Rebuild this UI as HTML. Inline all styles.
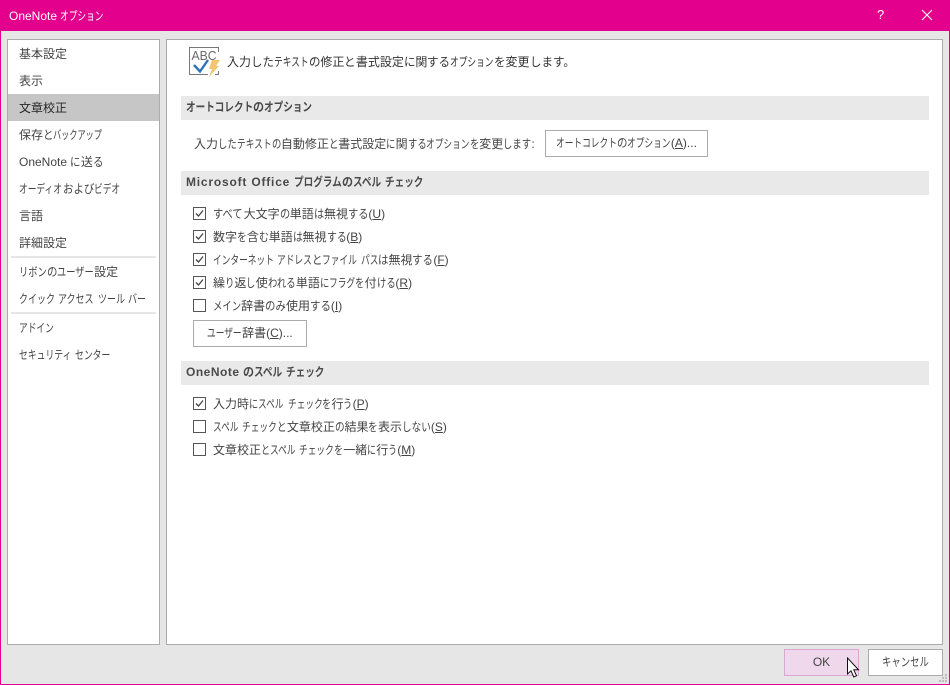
<!DOCTYPE html>
<html lang="ja"><head><meta charset="utf-8"><title>OneNote オプション</title>
<style>
html,body{margin:0;padding:0}
body{--ks:.725;--hs:.87;width:950px;height:685px;overflow:hidden;background:#e6e6e6;position:relative;font-family:"Liberation Sans","Noto Sans CJK JP",sans-serif;font-size:12px;color:#444}
.a{position:absolute;white-space:nowrap;line-height:16px}
.box{position:absolute;box-sizing:border-box;background:#fff;border:1px solid #ababab}
.sec{--ks:.8;--hs:.92;position:absolute;left:181px;width:748px;height:24px;background:#e9e9e9;font-weight:bold;line-height:23px;padding-left:5px;box-sizing:border-box;color:#4a4a4a;white-space:nowrap}
.cb{position:absolute;left:193px;width:13px;height:13px;box-sizing:border-box;border:1px solid #555;background:#fff}
.btn{position:absolute;box-sizing:border-box;background:#fff;border:1px solid #ababab;text-align:center;color:#444;white-space:nowrap}
.sep{position:absolute;left:11px;width:145px;height:2px;background:#e6e6e6}
u{text-decoration:underline}
i,em{font-style:normal;display:inline-block;white-space:nowrap;transform-origin:0 50%}
i{width:calc(var(--n)*12px*var(--ks));transform:scaleX(var(--ks))}
em{width:calc(var(--n)*12px*var(--hs));transform:scaleX(var(--hs))}
</style></head><body>
<div style="position:absolute;left:0;top:0;width:950px;height:31px;background:#e3008c"></div>
<div style="position:absolute;left:0;top:31px;width:1px;height:654px;background:#e3008c"></div>
<div style="position:absolute;right:0;top:31px;width:1px;height:654px;background:#e3008c"></div>
<div style="position:absolute;left:0;top:684px;width:950px;height:1px;background:#e3008c"></div>
<div class="a" style="left:9px;top:8px;color:#fff">OneNote <i style="--n:5">オプション</i></div>
<div class="a" style="left:877px;top:7px;color:#fff;font-size:13px">?</div>
<svg style="position:absolute;left:921px;top:9px" width="12" height="12"><path d="M1 1L11 11M11 1L1 11" stroke="#fff" stroke-width="1.1" fill="none"/></svg>

<div class="box" style="left:7px;top:39px;width:153px;height:606px"></div>
<div style="position:absolute;left:8px;top:94px;width:151px;height:27px;background:#c6c6c6"></div>
<div class="a" style="left:19px;top:46px">基本設定</div>
<div class="a" style="left:19px;top:73px">表示</div>
<div class="a" style="left:19px;top:100px;color:#262626">文章校正</div>
<div class="a" style="--ks:.68;left:19px;top:127px">保存<em style="--n:1">と</em><i style="--n:6">バックアップ</i></div>
<div class="a" style="left:19px;top:154px">OneNote <em style="--n:1">に</em>送<em style="--n:1">る</em></div>
<div class="a" style="left:19px;top:181px"><i style="--n:5">オーディオ</i><em style="--n:3">および</em><i style="--n:3">ビデオ</i></div>
<div class="a" style="left:19px;top:208px">言語</div>
<div class="a" style="left:19px;top:235px">詳細設定</div>
<div class="sep" style="top:256px"></div>
<div class="a" style="--ks:.77;left:19px;top:264px"><i style="--n:3">リボン</i><em style="--n:1">の</em><i style="--n:4">ユーザー</i>設定</div>
<div class="a" style="--ks:.75;left:19px;top:291px"><i style="--n:4">クイック</i> <i style="--n:4">アクセス</i> <i style="--n:3">ツール</i> <i style="--n:2">バー</i></div>
<div class="sep" style="top:312px"></div>
<div class="a" style="left:19px;top:320px"><i style="--n:4">アドイン</i></div>
<div class="a" style="--ks:.735;left:19px;top:347px"><i style="--n:6">セキュリティ</i> <i style="--n:4">センター</i></div>

<div class="box" style="left:166px;top:39px;width:777px;height:606px"></div>
<svg style="position:absolute;left:189px;top:47px" width="32" height="31" viewBox="0 0 32 31">
<path d="M29.5 5V.5H.5V27.5H19M26 27.5H29.5V24" fill="none" stroke="#777" stroke-width="1"/>
<text x="2.5" y="13" font-family="Liberation Sans" font-size="13" fill="#6a6a6a" textLength="25" lengthAdjust="spacingAndGlyphs">ABC</text>
<path d="M5 18L11 24.5L19 13" fill="none" stroke="#2f72b8" stroke-width="2.4"/>
<path d="M23 13H31L27 19H30L20 30L23 22H20Z" fill="#f4c470"/>
</svg>
<div class="a" style="--hs:.96;left:227px;top:54px;color:#333">入力<em style="--n:2">した</em><i style="--n:4">テキスト</i><em style="--n:1">の</em>修正<em style="--n:1">と</em>書式設定<em style="--n:1">に</em>関<em style="--n:2">する</em><i style="--n:5">オプション</i><em style="--n:1">を</em>変更<em style="--n:4">します。</em></div>

<div class="sec" style="top:96px"><i style="--n:7">オートコレクト</i><em style="--n:1">の</em><i style="--n:5">オプション</i></div>
<div class="a" style="--hs:.78;left:194px;top:136px">入力<em style="--n:2">した</em><i style="--n:4">テキスト</i><em style="--n:1">の</em>自動修正<em style="--n:1">と</em>書式設定<em style="--n:1">に</em>関<em style="--n:2">する</em><i style="--n:5">オプション</i><em style="--n:1">を</em>変更<em style="--n:3">します</em>:</div>
<div class="btn" style="left:545px;top:130px;width:163px;height:27px;line-height:25px"><i style="--n:7">オートコレクト</i><em style="--n:1">の</em><i style="--n:5">オプション</i>(<u>A</u>)...</div>

<div class="sec" style="top:171px"><span style="letter-spacing:.8px">Microsoft Office</span> <i style="--n:5">プログラム</i><em style="--n:1">の</em><i style="--n:3">スペル</i> <i style="--n:4">チェック</i></div>
<div class="cb" style="top:207px"><svg width="11" height="11" style="display:block"><path d="M2 5.5L4.5 8L9 2.5" fill="none" stroke="#444" stroke-width="1.3"/></svg></div>
<div class="a" style="--hs:.85;left:213px;top:206px"><em style="--n:3">すべて</em>大文字<em style="--n:1">の</em>単語<em style="--n:1">は</em>無視<em style="--n:2">する</em>(<u>U</u>)</div>
<div class="cb" style="top:230px"><svg width="11" height="11" style="display:block"><path d="M2 5.5L4.5 8L9 2.5" fill="none" stroke="#444" stroke-width="1.3"/></svg></div>
<div class="a" style="--hs:.82;left:213px;top:229px">数字<em style="--n:1">を</em>含<em style="--n:1">む</em>単語<em style="--n:1">は</em>無視<em style="--n:2">する</em>(<u>B</u>)</div>
<div class="cb" style="top:253px"><svg width="11" height="11" style="display:block"><path d="M2 5.5L4.5 8L9 2.5" fill="none" stroke="#444" stroke-width="1.3"/></svg></div>
<div class="a" style="left:213px;top:252px"><i style="--n:7">インターネット</i> <i style="--n:4">アドレス</i><em style="--n:1">と</em><i style="--n:4">ファイル</i> <i style="--n:2">パス</i><em style="--n:1">は</em>無視<em style="--n:2">する</em>(<u>F</u>)</div>
<div class="cb" style="top:276px"><svg width="11" height="11" style="display:block"><path d="M2 5.5L4.5 8L9 2.5" fill="none" stroke="#444" stroke-width="1.3"/></svg></div>
<div class="a" style="--hs:.78;left:213px;top:275px">繰<em style="--n:1">り</em>返<em style="--n:1">し</em>使<em style="--n:3">われる</em>単語<em style="--n:1">に</em><i style="--n:3">フラグ</i><em style="--n:1">を</em>付<em style="--n:2">ける</em>(<u>R</u>)</div>
<div class="cb" style="top:299px"></div>
<div class="a" style="--ks:.78;left:213px;top:298px"><i style="--n:3">メイン</i>辞書<em style="--n:2">のみ</em>使用<em style="--n:2">する</em>(<u>I</u>)</div>
<div class="btn" style="left:193px;top:320px;width:114px;height:27px;line-height:25px"><i style="--n:4">ユーザー</i>辞書(<u>C</u>)...</div>

<div class="sec" style="top:361px"><span style="letter-spacing:.5px">OneNote</span> <em style="--n:1">の</em><i style="--n:3">スペル</i> <i style="--n:4">チェック</i></div>
<div class="cb" style="top:397px"><svg width="11" height="11" style="display:block"><path d="M2 5.5L4.5 8L9 2.5" fill="none" stroke="#444" stroke-width="1.3"/></svg></div>
<div class="a" style="--hs:.76;left:213px;top:396px">入力時<em style="--n:1">に</em><i style="--n:3">スペル</i> <i style="--n:4">チェック</i><em style="--n:1">を</em>行<em style="--n:1">う</em>(<u>P</u>)</div>
<div class="cb" style="top:420px"></div>
<div class="a" style="--hs:.8;left:213px;top:419px"><i style="--n:3">スペル</i> <i style="--n:4">チェック</i><em style="--n:1">と</em>文章校正<em style="--n:1">の</em>結果<em style="--n:1">を</em>表示<em style="--n:3">しない</em>(<u>S</u>)</div>
<div class="cb" style="top:443px"></div>
<div class="a" style="--hs:.75;left:213px;top:442px">文章校正<em style="--n:1">と</em><i style="--n:3">スペル</i> <i style="--n:4">チェック</i><em style="--n:1">を</em>一緒<em style="--n:1">に</em>行<em style="--n:1">う</em>(<u>M</u>)</div>

<div class="btn" style="left:784px;top:649px;width:75px;height:27px;line-height:25px;background:#efd8ec;border-color:#d8a8d2">OK</div>
<div class="btn" style="--ks:.78;left:868px;top:649px;width:75px;height:27px;line-height:25px"><i style="--n:5">キャンセル</i></div>
<svg style="position:absolute;left:846px;top:657px" width="15" height="22" viewBox="0 0 15 22"><path d="M1.5 1V17L5 13.8L7.8 20L10.5 18.8L7.8 12.8H12.5Z" fill="#fff" stroke="#111" stroke-width="1"/></svg>
<svg style="position:absolute;left:938px;top:673px" width="10" height="10"><path d="M7 1h2v2h-2zM4 4h2v2h-2zM7 4h2v2h-2zM1 7h2v2h-2zM4 7h2v2h-2zM7 7h2v2h-2z" fill="#bdbdbd"/></svg>
</body></html>
